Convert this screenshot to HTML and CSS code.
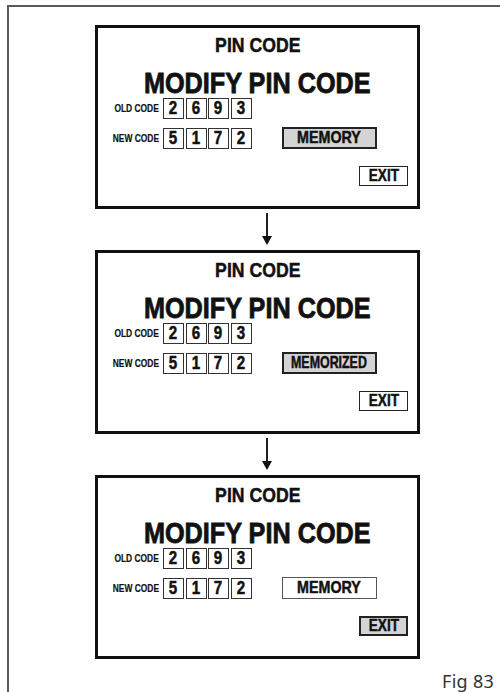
FILE: index.html
```html
<!DOCTYPE html>
<html lang="en">
<head>
  <meta charset="UTF-8">
  <title>Fig 83 - Modify PIN code</title>
  <link rel="stylesheet" href="styles.css">
</head>
<body>
  <div class="sheet">

    <div class="panel">
      <div class="title"><span class="narrow">PIN CODE</span></div>
      <div class="heading"><span class="narrow">MODIFY PIN CODE</span></div>
      <div class="codes">
        <div class="label"><span class="narrow">OLD CODE</span></div>
        <div class="digits">
          <span class="digit"><span class="narrow">2</span></span>
          <span class="digit"><span class="narrow">6</span></span>
          <span class="digit"><span class="narrow">9</span></span>
          <span class="digit"><span class="narrow">3</span></span>
        </div>
        <div></div>
        <div class="label"><span class="narrow">NEW CODE</span></div>
        <div class="digits">
          <span class="digit"><span class="narrow">5</span></span>
          <span class="digit"><span class="narrow">1</span></span>
          <span class="digit"><span class="narrow">7</span></span>
          <span class="digit"><span class="narrow">2</span></span>
        </div>
        <div class="btn btn-memory btn-active"><span class="narrow">MEMORY</span></div>
      </div>
      <div class="exit-row">
        <div class="btn btn-exit"><span class="narrow">EXIT</span></div>
      </div>
    </div>

    <div class="arrow"></div>

    <div class="panel">
      <div class="title"><span class="narrow">PIN CODE</span></div>
      <div class="heading"><span class="narrow">MODIFY PIN CODE</span></div>
      <div class="codes">
        <div class="label"><span class="narrow">OLD CODE</span></div>
        <div class="digits">
          <span class="digit"><span class="narrow">2</span></span>
          <span class="digit"><span class="narrow">6</span></span>
          <span class="digit"><span class="narrow">9</span></span>
          <span class="digit"><span class="narrow">3</span></span>
        </div>
        <div></div>
        <div class="label"><span class="narrow">NEW CODE</span></div>
        <div class="digits">
          <span class="digit"><span class="narrow">5</span></span>
          <span class="digit"><span class="narrow">1</span></span>
          <span class="digit"><span class="narrow">7</span></span>
          <span class="digit"><span class="narrow">2</span></span>
        </div>
        <div class="btn btn-memory btn-active"><span class="narrow squeeze">MEMORIZED</span></div>
      </div>
      <div class="exit-row">
        <div class="btn btn-exit"><span class="narrow">EXIT</span></div>
      </div>
    </div>

    <div class="arrow"></div>

    <div class="panel">
      <div class="title"><span class="narrow">PIN CODE</span></div>
      <div class="heading"><span class="narrow">MODIFY PIN CODE</span></div>
      <div class="codes">
        <div class="label"><span class="narrow">OLD CODE</span></div>
        <div class="digits">
          <span class="digit"><span class="narrow">2</span></span>
          <span class="digit"><span class="narrow">6</span></span>
          <span class="digit"><span class="narrow">9</span></span>
          <span class="digit"><span class="narrow">3</span></span>
        </div>
        <div></div>
        <div class="label"><span class="narrow">NEW CODE</span></div>
        <div class="digits">
          <span class="digit"><span class="narrow">5</span></span>
          <span class="digit"><span class="narrow">1</span></span>
          <span class="digit"><span class="narrow">7</span></span>
          <span class="digit"><span class="narrow">2</span></span>
        </div>
        <div class="btn btn-memory btn-plain"><span class="narrow">MEMORY</span></div>
      </div>
      <div class="exit-row">
        <div class="btn btn-exit btn-active"><span class="narrow">EXIT</span></div>
      </div>
    </div>

    <div class="caption">Fig 83</div>
  </div>
</body>
</html>
```

FILE: styles.css
```css
body {
  margin: 0;
  background: #fff;
  font-family: "Liberation Sans", Arial, sans-serif;
  color: #111;
}

.sheet {
  margin: 5px 0 0 7px;
  border-top: 2px solid #5a5a5a;
  border-left: 2px solid #5a5a5a;
  padding: 18px 0 0 86px;
  min-height: 700px;
  position: relative;
}

/* condensed, heavy look of the panel lettering */
.narrow {
  display: inline-block;
  transform: scaleX(0.84);
  -webkit-text-stroke: 0.5px #111;
}

.squeeze {
  transform: scaleX(0.73);
}

.panel {
  width: 319px;
  height: 178px;
  border: 3px solid #111;
  display: flex;
  flex-direction: column;
}

.title {
  text-align: center;
  font-weight: bold;
  font-size: 21px;
  line-height: 1;
  margin-top: 6px;
}

.heading {
  text-align: center;
  font-weight: bold;
  font-size: 29px;
  line-height: 1;
  margin-top: 14px;
}

.heading .narrow {
  transform: scaleX(0.87);
  -webkit-text-stroke: 0.8px #111;
}

.codes {
  display: grid;
  grid-template-columns: 61px auto auto;
  justify-content: start;
  column-gap: 4px;
  row-gap: 8px;
  align-items: center;
}

.label {
  text-align: right;
  font-weight: bold;
  font-size: 10px;
}

.label .narrow {
  transform-origin: right center;
  -webkit-text-stroke: 0.2px #111;
}

.digits {
  display: flex;
  gap: 1.5px;
}

.digit {
  width: 19px;
  height: 19px;
  border: 1.5px solid #333;
  display: flex;
  align-items: center;
  justify-content: center;
  font-weight: bold;
  font-size: 18px;
}

.btn {
  display: flex;
  align-items: center;
  justify-content: center;
  font-weight: bold;
  font-size: 17px;
  box-sizing: border-box;
}

.btn-memory {
  width: 95px;
  height: 22px;
  margin-left: 26px;
}

.btn-active {
  background: #d4d4d4;
  border: 2px solid #222;
}

.btn-plain {
  border: 1px solid #555;
}

.exit-row {
  display: flex;
  justify-content: flex-end;
  margin-top: 17px;
  padding-right: 9px;
}

.btn-exit {
  width: 49px;
  height: 20px;
  border: 1.5px solid #222;
}

.btn-exit .narrow {
  transform: scaleX(0.8);
}

.btn-exit.btn-active {
  border: 2px solid #222;
}

.arrow {
  width: 2px;
  height: 24px;
  background: #222;
  margin: 4px 0 13px 171px;
  position: relative;
}

.arrow::after {
  content: "";
  position: absolute;
  left: -4px;
  bottom: -8px;
  border-left: 5px solid transparent;
  border-right: 5px solid transparent;
  border-top: 9px solid #111;
}

.caption {
  position: absolute;
  left: 433px;
  top: 662px;
  font-family: "Noto Sans", sans-serif;
  font-size: 18px;
  letter-spacing: 0.3px;
  color: #333;
}
```
